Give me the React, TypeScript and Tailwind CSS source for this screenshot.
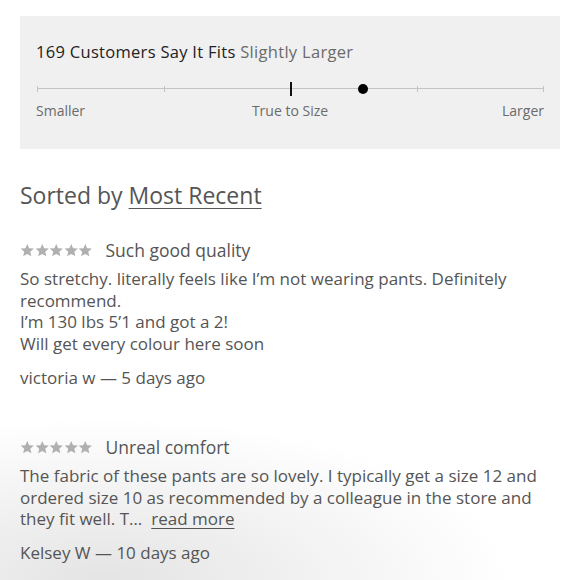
import React from 'react';

const font = { fontFamily: '"Open Sans", "Noto Sans", sans-serif' };

const Star: React.FC = () => (
  <svg width="14.5" height="14.5" viewBox="0 0 24 24" className="fill-[#b0b0b0]">
    <path d="M12 1.5l3.1 7.2 7.8.6-5.9 5.1 1.8 7.6L12 18l-6.8 4 1.8-7.6-5.9-5.1 7.8-.6z" />
  </svg>
);

const Stars: React.FC = () => (
  <div className="flex">
    {[0, 1, 2, 3, 4].map((i) => (
      <Star key={i} />
    ))}
  </div>
);

type Review = {
  title: string;
  body: React.ReactNode;
  author: string;
  when: string;
};

const REVIEWS: Review[] = [
  {
    title: 'Such good quality',
    body: (
      <>
        So stretchy. literally feels like I’m not wearing pants. Definitely recommend.
        <br />
        I’m 130 lbs 5’1 and got a 2!
        <br />
        Will get every colour here soon
      </>
    ),
    author: 'victoria w',
    when: '5 days ago',
  },
  {
    title: 'Unreal comfort',
    body: (
      <>
        The fabric of these pants are so lovely. I typically get a size 12 and
        <br />
        ordered size 10 as recommended by a colleague in the store and
        <br />
        they fit well. T…
        <span className="inline-block ml-[9px] leading-[20px] underline underline-offset-[3px] decoration-1">
          read more
        </span>
      </>
    ),
    author: 'Kelsey W',
    when: '10 days ago',
  },
];

const FitScale: React.FC = () => {
  const ticks = [0, 25, 75, 100];
  return (
    <div className="bg-[#f0f0f0] h-[133px] px-4 pt-[26px]">
      <div className="text-[16.5px] leading-5 tracking-[0.3px] text-[#222]">
        169 Customers Say It Fits <span className="text-[#6b6b6b]">Slightly Larger</span>
      </div>
      <div className="relative mt-[20px] mx-px h-[14px]">
        <div className="absolute left-0 right-0 top-[6px] h-px bg-[#c4c4c4]" />
        {ticks.map((t) => (
          <div
            key={t}
            className="absolute top-[4px] w-px h-[6px] bg-[#c4c4c4]"
            style={{ left: `${t}%` }}
          />
        ))}
        <div className="absolute left-1/2 top-0 w-[2px] h-[14px] bg-[#111]" />
        <div
          className="absolute top-[2px] w-[10px] h-[10px] -ml-[5px] rounded-full bg-black"
          style={{ left: '64.4%' }}
        />
      </div>
      <div className="mt-[5px] grid grid-cols-[1fr_auto_1fr] text-[14px] leading-5 text-[#6b6b6b]">
        <span>Smaller</span>
        <span>True to Size</span>
        <span className="text-right">Larger</span>
      </div>
    </div>
  );
};

export default function App() {
  return (
    <div
      className="w-[580px] h-[580px] overflow-hidden bg-white bg-[radial-gradient(ellipse_70%_28%_at_18%_100%,#e4e4e4_0%,#ffffff_100%)] px-5 pt-4"
      style={font}
    >
      <FitScale />
      <h2 className="mt-[32px] text-[23px] leading-7 text-[#555]">
        Sorted by <span className="underline underline-offset-[4px] decoration-1">Most Recent</span>
      </h2>
      <div className="mt-[29px]">
        {REVIEWS.map((r, i) => (
          <div key={i} className={i > 0 ? 'mt-[45px]' : ''}>
            <div className="flex items-center gap-[13px] h-6">
              <Stars />
              <span className="text-[17.5px] text-[#555]">{r.title}</span>
            </div>
            <p className="mt-[6px] text-[17px] leading-[21.7px] text-[#555]">{r.body}</p>
            <div className="mt-[11px] text-[17px] leading-6 text-[#555]">
              {r.author} — {r.when}
            </div>
          </div>
        ))}
      </div>
    </div>
  );
}
